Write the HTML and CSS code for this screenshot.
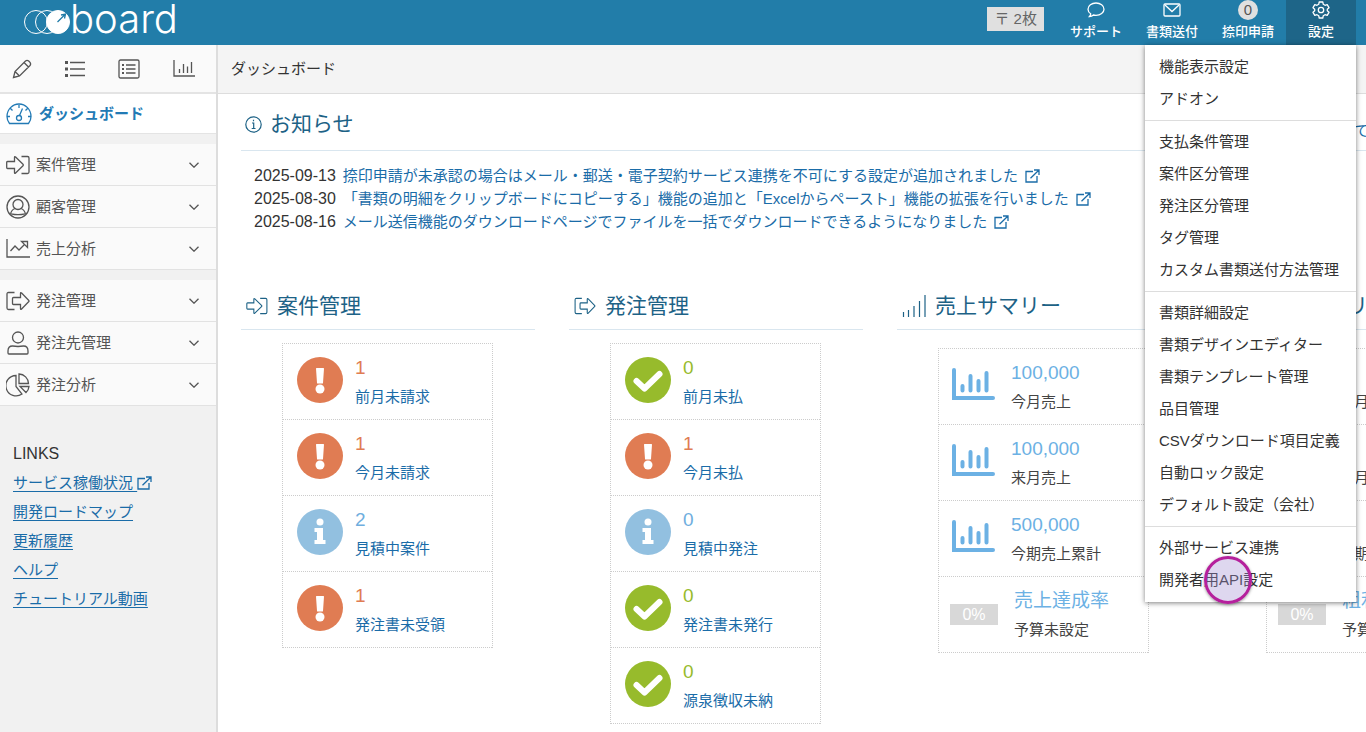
FILE: index.html
```html
<!DOCTYPE html>
<html lang="ja">
<head>
    <meta charset="UTF-8">
    <meta name="viewport" content="width=device-width, initial-scale=1.0">
    <title>ダッシュボード | board</title>
    <link rel="stylesheet" href="styles.css">
</head>
<body>
    <!-- Shared icons -->
    <svg class="sprite" aria-hidden="true">
        <symbol id="i-in" viewBox="0 0 24 20"><path d="M1.500 6.500Q.7 6.500 .7 7.500V12.500Q.7 13.500 1.500 13.500H8.500V17.500Q8.500 19 9.600 18L17 10.800Q17.800 10 17 9.200L9.600 2Q8.500 1 8.500 2.500V6.500ZM15.500 1.500H21.500Q23 1.500 23 3V17Q23 18.500 21.500 18.500H15.500"/></symbol>
        <symbol id="i-out" viewBox="0 0 24 20"><path d="M8.500 1.500H2.500Q1 1.500 1 3V17Q1 18.500 2.500 18.500H8.500M7.500 6.500Q6.500 6.500 6.500 7.500V12.500Q6.500 13.500 7.500 13.500H14.500V17.500Q14.500 19 15.600 18L22.600 10.800Q23.400 10 22.600 9.200L15.600 2Q14.500 1 14.500 2.500V6.500Z"/></symbol>
        <symbol id="i-ext" viewBox="0 0 15 14"><path d="M8 2.500H1V13H12V7M9 1H14V6M14 1L5.500 9.200"/></symbol>
        <symbol id="i-down" viewBox="0 0 10 6"><path d="M.5 .7L5 5.200L9.500 .7"/></symbol>
        <symbol id="i-bars" viewBox="0 0 24 22"><path d="M1.500 17V22M6.500 15V22M12 11V22M17.500 6V22M23 0V22"/></symbol>
        <symbol id="i-chart" viewBox="0 0 43 32"><path d="M2 2V30H41M10.500 18V22.500M18.500 8V22.500M26.500 13V22.500M34.500 5V22.500" stroke-width="4" stroke-linecap="round"/></symbol>
        <symbol id="i-warn" viewBox="0 0 46 46"><circle cx="23" cy="23" r="23" class="solid"/><path d="M19 11.500Q19 11 19.600 11H26.400Q27 11 27 11.500L26 26Q26 26.500 25.400 26.500H20.600Q20 26.500 20 26Z" class="white"/><circle cx="23" cy="32" r="4.500" class="white"/></symbol>
        <symbol id="i-ok" viewBox="0 0 46 46"><circle cx="23" cy="23" r="23" class="solid"/><path d="M11.500 24L19.500 31.500L34.500 17" stroke="#fff" stroke-width="6" stroke-linecap="round" stroke-linejoin="round"/></symbol>
        <symbol id="i-info" viewBox="0 0 46 46"><circle cx="23" cy="23" r="23" class="solid"/><circle cx="23" cy="13" r="3.500" class="white"/><path d="M17.500 19H26V31H28.500V35H17.500V31H20V23H17.500Z" class="white"/></symbol>
    </svg>

    <header class="header">
        <a href="#" class="logo">
            <svg width="47" height="26" viewBox="0 0 47 26" fill="none" stroke="#fff">
                <circle cx="13" cy="13" r="11.500"/>
                <circle cx="24" cy="13" r="11.500"/>
                <circle cx="35" cy="13" r="11.500" fill="#fff"/>
                <path d="M34.500 13L42 5.500M38 6L42.500 5L41.500 9.500" stroke="#227da9" stroke-width="1.300"/>
            </svg>
            <span>board</span>
        </a>
        <span class="letters">〒 2枚</span>
        <nav class="nav">
            <a href="#" class="nav-item">
                <span class="nav-icon"><svg class="icon" width="18" height="16" viewBox="0 0 18 16"><path d="M2.500 14.500C3.500 13.500 3.800 12.800 3.700 11.800C2 10.700 1 9 1 7.200C1 3.700 4.600 1 9 1S17 3.700 17 7.200S13.400 13.300 9 13.300C8 13.300 7.200 13.200 6.400 13C5.300 14 4 14.500 2.500 14.500Z"/></svg></span>
                サポート
            </a>
            <a href="#" class="nav-item">
                <span class="nav-icon"><svg class="icon" width="18" height="14" viewBox="0 0 18 14"><rect x="1" y="1" width="16" height="12" rx="1"/><path d="M2 2L9 8.500L16 2"/></svg></span>
                書類送付
            </a>
            <a href="#" class="nav-item">
                <span class="nav-icon"><span class="badge">0</span></span>
                捺印申請
            </a>
            <div class="dropdown">
                <button type="button" class="nav-item active" aria-expanded="true">
                    <span class="nav-icon"><svg class="icon" width="18" height="18" viewBox="0 0 18 18"><path d="M7.200 1H10.800L11.300 3.300L13 4.300L15.200 3.600L17 6.700L15.300 8.200V9.800L17 11.300L15.200 14.400L13 13.700L11.300 14.700L10.800 17H7.200L6.700 14.700L5 13.700L2.800 14.400L1 11.300L2.700 9.800V8.200L1 6.700L2.800 3.600L5 4.300L6.700 3.300Z" stroke-linejoin="round"/><circle cx="9" cy="9" r="2.700"/></svg></span>
                    設定
                </button>
                <div class="menu">
                    <ul>
                        <li><a href="#">機能表示設定</a></li>
                        <li><a href="#">アドオン</a></li>
                    </ul>
                    <ul>
                        <li><a href="#">支払条件管理</a></li>
                        <li><a href="#">案件区分管理</a></li>
                        <li><a href="#">発注区分管理</a></li>
                        <li><a href="#">タグ管理</a></li>
                        <li><a href="#">カスタム書類送付方法管理</a></li>
                    </ul>
                    <ul>
                        <li><a href="#">書類詳細設定</a></li>
                        <li><a href="#">書類デザインエディター</a></li>
                        <li><a href="#">書類テンプレート管理</a></li>
                        <li><a href="#">品目管理</a></li>
                        <li><a href="#">CSVダウンロード項目定義</a></li>
                        <li><a href="#">自動ロック設定</a></li>
                        <li><a href="#">デフォルト設定（会社）</a></li>
                    </ul>
                    <ul>
                        <li><a href="#">外部サービス連携</a></li>
                        <li class="pointed"><a href="#">開発者用API設定</a><span class="pointer"></span></li>
                    </ul>
                </div>
            </div>
        </nav>
    </header>

    <div class="layout">
        <aside class="sidebar">
            <div class="tools">
                <button type="button" aria-label="作成"><svg class="icon" width="20" height="20" viewBox="0 0 20 20"><path d="M1.500 18.500L3 12.500L13.500 2Q15 .8 16.700 2L18 3.300Q19.200 5 18 6.500L7.500 17ZM3 12.500L7.500 17M12 3.500L16.500 8"/></svg></button>
                <button type="button" aria-label="一覧"><svg class="icon" width="20" height="16" viewBox="0 0 20 16"><path d="M5 1.500H20M5 8H20M5 14.500H20"/><path d="M0 1.500H3M0 8H3M0 14.500H3" stroke-width="3"/></svg></button>
                <button type="button" aria-label="明細"><svg class="icon" width="22" height="20" viewBox="0 0 22 20"><rect x="1" y="1" width="20" height="18" rx="1.500"/><path d="M8 6H17.500M8 10H17.500M8 14H17.500"/><path d="M4 6H6M4 10H6M4 14H6" stroke-width="2"/></svg></button>
                <button type="button" aria-label="グラフ"><svg class="icon" width="22" height="17" viewBox="0 0 22 17"><path d="M1 0V16H22M6.500 9V13M10.500 4V13M14.500 6.500V13M18.500 2V13"/></svg></button>
            </div>
            <a href="#" class="current">
                <svg class="icon" width="26" height="22" viewBox="0 0 26 22"><path d="M3.500 20.500Q1 17.500 1 13.500A12 12.500 0 0 1 25 13.500Q25 17.500 22.500 20.500ZM13 2V5M4.500 5.500L6.500 7.500M21.500 5.500L19.500 7.500M1.500 13.500H4M22 13.500H24.500M16.500 5.500L13.500 12.500"/><circle cx="13" cy="15" r="2.500"/></svg>
                ダッシュボード
            </a>
            <div class="group">
                <button type="button"><svg class="icon" width="24" height="20"><use href="#i-in"/></svg>案件管理<svg class="icon chevron" width="10" height="6"><use href="#i-down"/></svg></button>
                <button type="button"><svg class="icon" width="24" height="24" viewBox="0 0 24 24"><circle cx="12" cy="12" r="11"/><circle cx="12" cy="9.500" r="5"/><path d="M9 13.500C6.500 14.500 5 16 4.500 19.500M15 13.500C17.500 14.500 19 16 19.500 19.500M5 18.800Q12 20.500 19 18.800"/></svg>顧客管理<svg class="icon chevron" width="10" height="6"><use href="#i-down"/></svg></button>
                <button type="button"><svg class="icon" width="24" height="19" viewBox="0 0 24 19"><path d="M1 0V18H24M4.500 12L9 7L13 11L18.500 5.500M15.500 2.500H21.500V8.500Z"/></svg>売上分析<svg class="icon chevron" width="10" height="6"><use href="#i-down"/></svg></button>
            </div>
            <div class="group">
                <button type="button"><svg class="icon" width="24" height="20"><use href="#i-out"/></svg>発注管理<svg class="icon chevron" width="10" height="6"><use href="#i-down"/></svg></button>
                <button type="button"><svg class="icon" width="24" height="24" viewBox="0 0 24 24"><circle cx="12" cy="6.500" r="5.500"/><path d="M3 23Q2 23 2 22V20Q2 15 6.500 15Q9 15 12 15.500Q15 15 17.500 15Q22 15 22 20V22Q22 23 21 23Z"/></svg>発注先管理<svg class="icon chevron" width="10" height="6"><use href="#i-down"/></svg></button>
                <button type="button"><svg class="icon" width="24" height="24" viewBox="0 0 24 24"><path d="M10 2.500A10.200 10.200 0 1 0 16 21L10 13.500ZM13 1V10.500H22.500A9.800 9.800 0 0 0 13 1ZM14 13.500H23Q22.700 17 20 19.500Z"/></svg>発注分析<svg class="icon chevron" width="10" height="6"><use href="#i-down"/></svg></button>
            </div>
            <div class="links">
                <h2>LINKS</h2>
                <ul>
                    <li><a href="#">サービス稼働状況 <svg class="icon" width="15" height="14"><use href="#i-ext"/></svg></a></li>
                    <li><a href="#">開発ロードマップ</a></li>
                    <li><a href="#">更新履歴</a></li>
                    <li><a href="#">ヘルプ</a></li>
                    <li><a href="#">チュートリアル動画</a></li>
                </ul>
            </div>
        </aside>

        <main class="main">
            <h1>ダッシュボード</h1>
            <div class="content">
                <section class="news">
                    <div class="news-head">
                        <h2><svg class="icon" width="17" height="17" viewBox="0 0 17 17"><circle cx="8.500" cy="8.500" r="7.700"/><path d="M7 7H8.700V12.500M6.700 12.500H10.500M8.500 3.800V5.300"/></svg>お知らせ</h2>
                        <a href="#">すべて見る</a>
                    </div>
                    <ul>
                        <li><time>2025-09-13</time><a href="#">捺印申請が未承認の場合はメール・郵送・電子契約サービス連携を不可にする設定が追加されました<svg class="icon" width="15" height="14"><use href="#i-ext"/></svg></a></li>
                        <li><time>2025-08-30</time><a href="#">「書類の明細をクリップボードにコピーする」機能の追加と「Excelからペースト」機能の拡張を行いました<svg class="icon" width="15" height="14"><use href="#i-ext"/></svg></a></li>
                        <li><time>2025-08-16</time><a href="#">メール送信機能のダウンロードページでファイルを一括でダウンロードできるようになりました<svg class="icon" width="15" height="14"><use href="#i-ext"/></svg></a></li>
                    </ul>
                </section>

                <div class="columns">
                    <section>
                        <h2><svg class="icon" width="22" height="18"><use href="#i-in"/></svg>案件管理</h2>
                        <ul class="stats">
                            <li class="warn"><svg class="mark"><use href="#i-warn"/></svg><div><b>1</b><a href="#">前月未請求</a></div></li>
                            <li class="warn"><svg class="mark"><use href="#i-warn"/></svg><div><b>1</b><a href="#">今月未請求</a></div></li>
                            <li class="info"><svg class="mark"><use href="#i-info"/></svg><div><b>2</b><a href="#">見積中案件</a></div></li>
                            <li class="warn"><svg class="mark"><use href="#i-warn"/></svg><div><b>1</b><a href="#">発注書未受領</a></div></li>
                        </ul>
                    </section>
                    <section>
                        <h2><svg class="icon" width="22" height="18"><use href="#i-out"/></svg>発注管理</h2>
                        <ul class="stats">
                            <li class="ok"><svg class="mark"><use href="#i-ok"/></svg><div><b>0</b><a href="#">前月未払</a></div></li>
                            <li class="warn"><svg class="mark"><use href="#i-warn"/></svg><div><b>1</b><a href="#">今月未払</a></div></li>
                            <li class="info"><svg class="mark"><use href="#i-info"/></svg><div><b>0</b><a href="#">見積中発注</a></div></li>
                            <li class="ok"><svg class="mark"><use href="#i-ok"/></svg><div><b>0</b><a href="#">発注書未発行</a></div></li>
                            <li class="ok"><svg class="mark"><use href="#i-ok"/></svg><div><b>0</b><a href="#">源泉徴収未納</a></div></li>
                        </ul>
                    </section>
                    <section>
                        <h2><svg class="icon" width="24" height="22"><use href="#i-bars"/></svg>売上サマリー</h2>
                        <ul class="stats summary">
                            <li><svg class="chart"><use href="#i-chart"/></svg><div><b>100,000</b><span>今月売上</span></div></li>
                            <li><svg class="chart"><use href="#i-chart"/></svg><div><b>100,000</b><span>来月売上</span></div></li>
                            <li><svg class="chart"><use href="#i-chart"/></svg><div><b>500,000</b><span>今期売上累計</span></div></li>
                            <li><em class="rate">0%</em><div><b>売上達成率</b><span>予算未設定</span></div></li>
                        </ul>
                    </section>
                    <section>
                        <h2><svg class="icon" width="24" height="22"><use href="#i-bars"/></svg>粗利サマリー</h2>
                        <ul class="stats summary">
                            <li><svg class="chart"><use href="#i-chart"/></svg><div><b>0</b><span>今月粗利</span></div></li>
                            <li><svg class="chart"><use href="#i-chart"/></svg><div><b>0</b><span>来月粗利</span></div></li>
                            <li><svg class="chart"><use href="#i-chart"/></svg><div><b>0</b><span>今期粗利累計</span></div></li>
                            <li><em class="rate">0%</em><div><b>粗利達成率</b><span>予算未設定</span></div></li>
                        </ul>
                    </section>
                </div>
            </div>
        </main>
    </div>
</body>
</html>
```

FILE: styles.css
```css
* {
    box-sizing: border-box;
}

body {
    margin: 0;
    min-height: 100vh;
    display: flex;
    flex-direction: column;
    font-family: "Liberation Sans", "Noto Sans CJK JP", sans-serif;
    font-size: 15px;
    line-height: 23px;
    color: #333;
    background: #fff;
}

ul {
    list-style: none;
    margin: 0;
    padding: 0;
}

h1, h2 {
    margin: 0;
    font-weight: normal;
}

a {
    color: #1a6ca8;
    text-decoration: none;
}

button {
    font: inherit;
    color: inherit;
    background: none;
    border: none;
    padding: 0;
    cursor: pointer;
}

.sprite {
    display: none;
}

.icon {
    flex: none;
    fill: none;
    stroke: currentColor;
    stroke-width: 1.3;
}

/* Header */
.header {
    display: flex;
    align-items: flex-start;
    height: 45px;
    padding: 0 10px 0 23px;
    background: #227da9;
    color: #fff;
}

.logo {
    display: flex;
    align-items: center;
    height: 44px;
    color: #fff;
}

.logo span {
    padding-bottom: 7px;
    font-family: Inter, sans-serif;
    font-size: 40px;
    font-weight: 300;
    line-height: 40px;
}

.letters {
    margin: 7px 14px 0 auto;
    padding: 0 7px;
    line-height: 24px;
    background: #e0e0e0;
    color: #666;
}

.nav {
    display: flex;
}

.nav-item {
    display: flex;
    flex-direction: column;
    align-items: center;
    height: 45px;
    padding: 0 12px;
    font-size: 13px;
    font-weight: 500;
    line-height: 24px;
    color: #fff;
}

.nav-icon {
    display: flex;
    align-items: center;
    height: 20px;
}

.badge {
    width: 20px;
    height: 20px;
    border-radius: 50%;
    background: #e0e0e0;
    color: #555;
    font-size: 15px;
    font-weight: normal;
    line-height: 20px;
    text-align: center;
}

.dropdown {
    position: relative;
}

.nav-item.active {
    width: 70px;
    background: #1e6588;
}

.menu {
    position: absolute;
    top: 45px;
    right: 0;
    z-index: 10;
    min-width: 211px;
    padding: 1px 0;
    background: #fff;
    color: #333;
    box-shadow: 0 1px 5px rgba(0, 0, 0, 0.5);
    white-space: nowrap;
}

.menu ul {
    padding: 5px 0;
}

.menu ul + ul {
    border-top: 1px solid #ddd;
}

.menu a {
    display: block;
    padding: 0 14px;
    line-height: 32px;
    color: #333;
}

.pointed {
    position: relative;
}

.pointer {
    position: absolute;
    top: -8px;
    left: 59px;
    width: 48px;
    height: 48px;
    border: 3px solid #b5209c;
    border-radius: 50%;
    background: rgba(160, 140, 210, 0.35);
    box-shadow: 0 1px 3px rgba(0, 0, 0, 0.4);
}

.layout {
    flex: 1;
    display: flex;
}

/* Sidebar */
.sidebar {
    flex: none;
    width: 218px;
    border-right: 2px solid #ddd;
    background: #f1f1f1;
    color: #555;
}

.tools {
    display: flex;
    align-items: center;
    justify-content: space-between;
    height: 49px;
    padding: 0 21px 0 12px;
    background: #fafafa;
    border-bottom: 2px solid #e4e4e4;
}

.tools button {
    display: flex;
}

.current {
    display: flex;
    align-items: center;
    gap: 7px;
    height: 40px;
    padding-left: 6px;
    background: #fff;
    border-bottom: 1px solid #e4e4e4;
    color: #227ab5;
    font-weight: bold;
}

.group {
    margin-top: 10px;
}

.group button {
    display: flex;
    align-items: center;
    gap: 6px;
    width: 100%;
    height: 42px;
    padding: 0 17px 0 6px;
    background: #fafafa;
    border-bottom: 1px solid #e2e2e2;
}

.group .chevron {
    margin-left: auto;
}

.links {
    margin: 33px 13px;
}

.links h2 {
    font-size: 16px;
    line-height: 29px;
    color: #333;
}

.links li {
    line-height: 29px;
}

.links a {
    text-decoration: underline;
    text-underline-offset: 3px;
}

.links .icon {
    vertical-align: -2px;
}

/* Main */
.main {
    flex: 1;
    min-width: 0;
    overflow: hidden;
}

h1 {
    height: 49px;
    padding-left: 13px;
    font-size: 15px;
    line-height: 47px;
    background: #f4f4f4;
    border-bottom: 1px solid #ddd;
}

.content {
    width: max-content;
    padding: 15px 23px;
}

.content h2 {
    display: flex;
    align-items: center;
    gap: 9px;
    padding-left: 5px;
    font-size: 21px;
    line-height: 30px;
    color: #1d6286;
}

.content h2 .icon {
    stroke-width: 1.2;
}

.news-head {
    display: flex;
    align-items: flex-end;
    justify-content: space-between;
    padding: 0 120px 11px 0;
    border-bottom: 1px solid #d9e6ef;
}

.news-head h2 {
    gap: 8px;
    padding-left: 4px;
}

.news-head > a {
    line-height: 16px;
}

.news ul {
    padding: 13px 13px 0;
}

.news li {
    display: flex;
    gap: 7px;
}

.news time {
    font-size: 16px;
}

.news li .icon {
    margin-left: 7px;
    vertical-align: -2px;
}

.columns {
    display: grid;
    grid-template-columns: repeat(4, 294px);
    gap: 34px;
    margin-top: 58px;
}

.columns h2 {
    padding-bottom: 8px;
    border-bottom: 1px solid #d9e6ef;
}

.stats {
    width: 211px;
    margin: 13px 0 0 41px;
    border: 1px dotted #ccc;
    border-bottom: none;
}

.stats li {
    display: flex;
    align-items: center;
    gap: 12px;
    height: 76px;
    padding-left: 14px;
    border-bottom: 1px dotted #ccc;
}

.stats b,
.stats a,
.stats span {
    display: block;
    line-height: 29px;
}

.stats b {
    font-size: 19px;
    font-weight: normal;
}

.mark {
    width: 46px;
    height: 46px;
    margin-bottom: 4px;
    fill: none;
}

.solid {
    fill: currentColor;
}

.white {
    fill: #fff;
}

.warn {
    color: #e07c53;
}

.ok {
    color: #97bb2c;
}

.info {
    color: #6faede;
}

.info .mark {
    color: #92c0e0;
}

.summary {
    margin-top: 18px;
    color: #6cb1e4;
}

.summary li {
    gap: 16px;
    padding-left: 13px;
}

.summary span {
    color: #444;
}

.chart {
    width: 43px;
    height: 32px;
    margin-bottom: 6px;
    fill: none;
    stroke: currentColor;
}

.rate {
    width: 48px;
    margin-left: -2px;
    background: #d8d8d8;
    color: #fff;
    font-style: normal;
    font-size: 16px;
    line-height: 21px;
    text-align: center;
}
```
